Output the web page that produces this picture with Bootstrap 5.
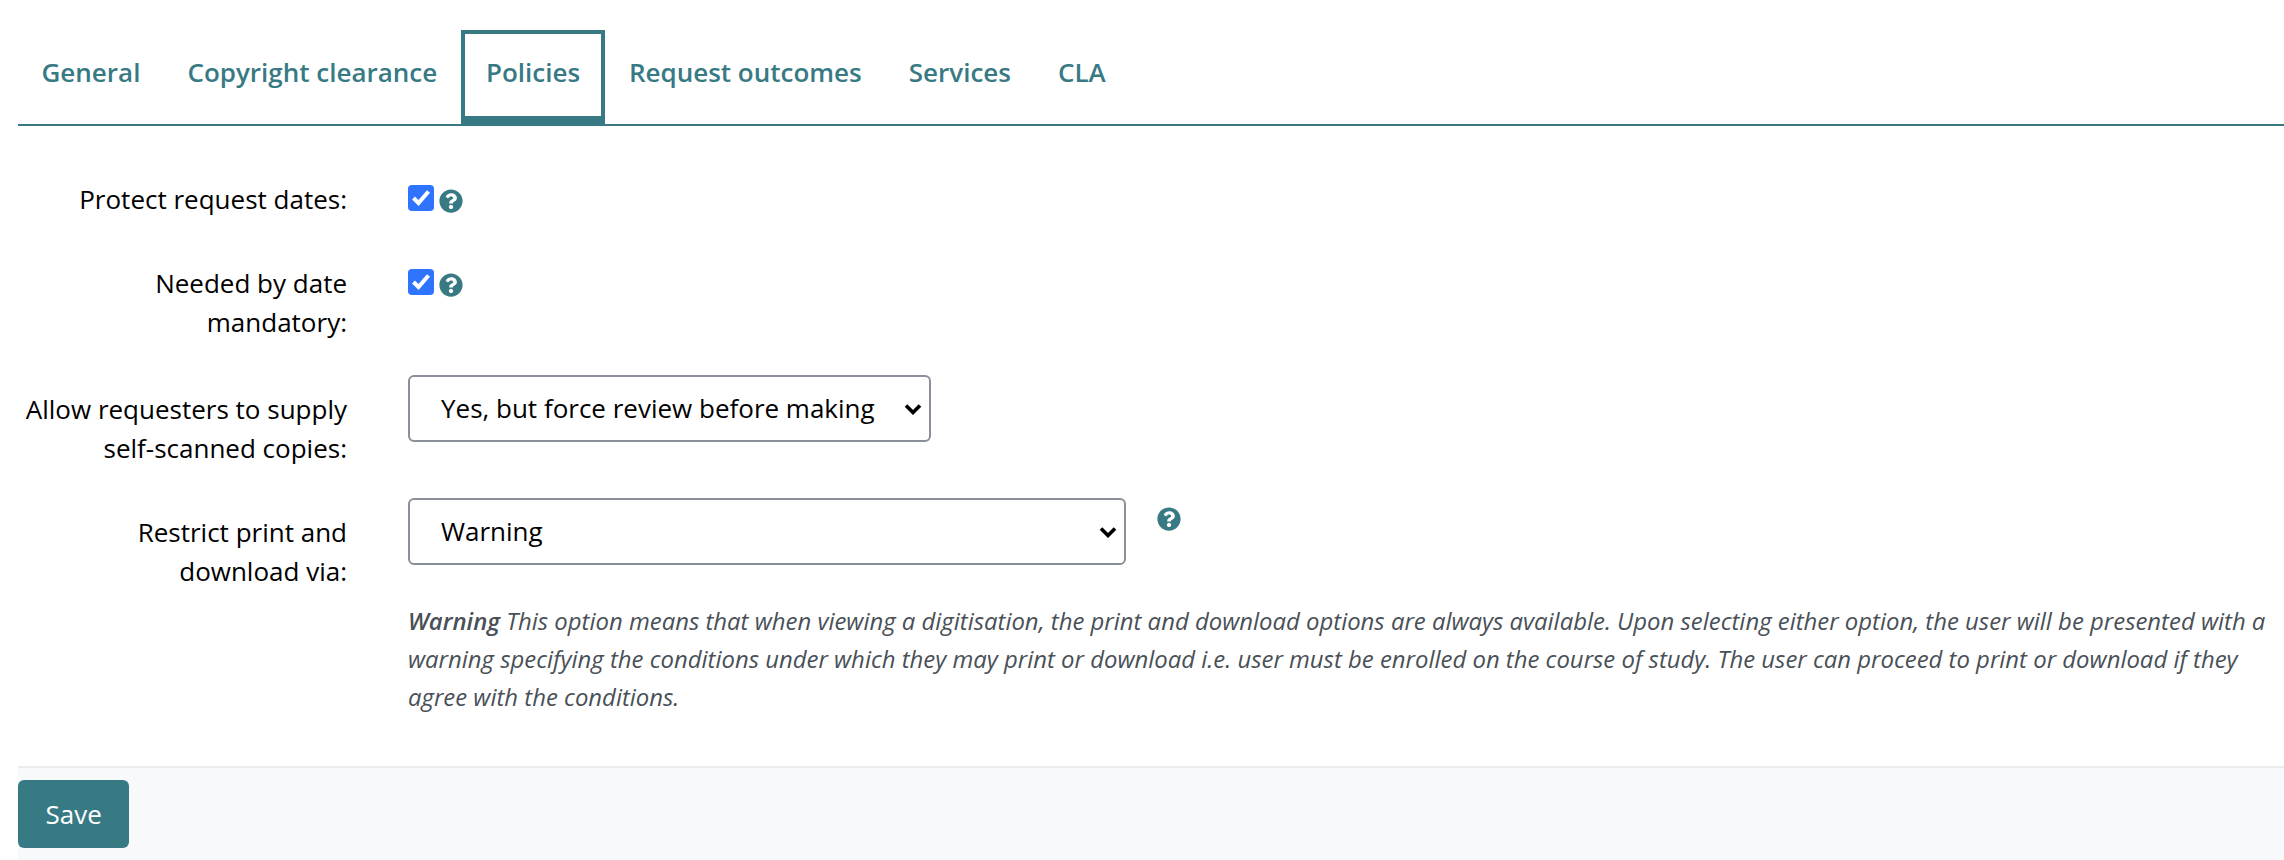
<!DOCTYPE html>
<html lang="en">
<head>
<meta charset="utf-8">
<title>Policies</title>
<link href="https://cdn.jsdelivr.net/npm/bootstrap@5.3.0/dist/css/bootstrap.min.css" rel="stylesheet">
<style>
body{font-family:"Open Sans",sans-serif;font-size:26px;line-height:39px;color:#000;background:#fff;}
.shell{padding:30px 0 0 18px;min-height:860px;display:flex;flex-direction:column;}
.tabbar{border-bottom:2px solid #377a84;height:96px;}
.tabbar .nav-link{color:#377a84;font-weight:600;font-size:26px;line-height:39px;padding:23px 23.5px 0;border:0;}
.tabbar .nav-link.active{color:#377a84;border:4px solid #377a84;border-bottom-width:10px;border-radius:0;padding:19px 21.25px 0;height:96px;background:#fff;}
.formarea{padding-top:54px;flex:1;}
.frow{display:flex;margin-bottom:30px;}
.frow.wide{margin-bottom:45px;}
.frow.tall{margin-bottom:33px;}
.lbl{width:329px;text-align:right;flex:none;margin:0;}
.lbl.pushed{padding-top:15px;}
.ctl{margin-left:61px;flex:1;min-width:0;padding-right:10px;}
.chk{appearance:none;-webkit-appearance:none;width:26px;height:26px;margin:5px 0 0;border-radius:4px;background:#2f74ff url("data:image/svg+xml,%3Csvg xmlns='http://www.w3.org/2000/svg' viewBox='0 0 26 26'%3E%3Cpath d='M5.5 13l5 5 10-11.5' fill='none' stroke='%23fff' stroke-width='4'/%3E%3C/svg%3E") center/100% no-repeat;flex:none;}
.hlp{width:24px;height:24px;fill:#377a84;flex:none;}
.hlp.mini{margin:9px 0 0 5px;}
.hlp.far{margin:9px 0 0 31px;}
.form-select.pick{font-size:26px;line-height:39px;height:67px;padding:12px 50px 12px 31px;border:2px solid #8a8f99;border-radius:6px;color:#000;font-family:inherit;background-image:url("data:image/svg+xml,%3Csvg xmlns='http://www.w3.org/2000/svg' viewBox='0 0 18 12'%3E%3Cpath d='M2 2.5l7 7 7-7' fill='none' stroke='%23000' stroke-width='3.6'/%3E%3C/svg%3E");background-size:18px 12px;background-position:right 7px center;}
.w1{width:523px;}.w2{width:718px;}
.note{font-style:italic;color:#495057;font-size:23.9px;line-height:38px;margin:37px 0 0;}
.note b{font-weight:600;}
.foot{background:#f8f9fa;border-top:2px solid #e9ecef;height:94px;padding-top:12px;}
.savebtn{background:#377a84;border:0;color:#fff;font-size:26px;line-height:39px;padding:14.5px 27.5px;border-radius:6px;}
</style>
</head>
<body>
<div class="shell">
  <ul class="nav tabbar">
    <li class="nav-item"><a class="nav-link" href="#">General</a></li>
    <li class="nav-item"><a class="nav-link" href="#">Copyright clearance</a></li>
    <li class="nav-item"><a class="nav-link active" href="#">Policies</a></li>
    <li class="nav-item"><a class="nav-link" href="#">Request outcomes</a></li>
    <li class="nav-item"><a class="nav-link" href="#">Services</a></li>
    <li class="nav-item"><a class="nav-link" href="#">CLA</a></li>
  </ul>
  <form class="formarea">
    <div class="frow wide">
      <label class="lbl">Protect request dates:</label>
      <div class="ctl d-flex align-items-start"><input class="chk" type="checkbox" checked>
        <svg class="hlp mini" viewBox="0 0 512 512"><path d="M504 256c0 137-111 248-248 248S8 393 8 256 119 8 256 8s248 111 248 248zM263 90c-54 0-89 23-116 64-4 5-3 12 3 16l35 26c5 4 13 3 17-2 18-23 30-36 57-36 20 0 45 13 45 32 0 15-12 22-32 33-23 13-54 30-54 71v4c0 7 5 12 12 12h56c7 0 12-5 12-12v-1c0-29 83-30 83-106 0-57-59-101-118-101zm-7 246c-25 0-46 21-46 46s21 46 46 46 46-21 46-46-21-46-46-46z"/></svg></div>
    </div>
    <div class="frow tall">
      <label class="lbl">Needed by date mandatory:</label>
      <div class="ctl d-flex align-items-start"><input class="chk" type="checkbox" checked>
        <svg class="hlp mini" viewBox="0 0 512 512"><path d="M504 256c0 137-111 248-248 248S8 393 8 256 119 8 256 8s248 111 248 248zM263 90c-54 0-89 23-116 64-4 5-3 12 3 16l35 26c5 4 13 3 17-2 18-23 30-36 57-36 20 0 45 13 45 32 0 15-12 22-32 33-23 13-54 30-54 71v4c0 7 5 12 12 12h56c7 0 12-5 12-12v-1c0-29 83-30 83-106 0-57-59-101-118-101zm-7 246c-25 0-46 21-46 46s21 46 46 46 46-21 46-46-21-46-46-46z"/></svg></div>
    </div>
    <div class="frow">
      <label class="lbl pushed">Allow requesters to supply self-scanned copies:</label>
      <div class="ctl"><select class="form-select pick w1"><option>Yes, but force review before making</option></select></div>
    </div>
    <div class="frow mb-0">
      <label class="lbl pushed">Restrict print and download via:</label>
      <div class="ctl">
        <div class="d-flex align-items-start">
          <select class="form-select pick w2"><option>Warning</option></select>
          <svg class="hlp far" viewBox="0 0 512 512"><path d="M504 256c0 137-111 248-248 248S8 393 8 256 119 8 256 8s248 111 248 248zM263 90c-54 0-89 23-116 64-4 5-3 12 3 16l35 26c5 4 13 3 17-2 18-23 30-36 57-36 20 0 45 13 45 32 0 15-12 22-32 33-23 13-54 30-54 71v4c0 7 5 12 12 12h56c7 0 12-5 12-12v-1c0-29 83-30 83-106 0-57-59-101-118-101zm-7 246c-25 0-46 21-46 46s21 46 46 46 46-21 46-46-21-46-46-46z"/></svg>
        </div>
        <p class="note"><b>Warning</b> This option means that when viewing a digitisation, the print and download options are always available. Upon selecting either option, the user will be presented with a warning specifying the conditions under which they may print or download i.e. user must be enrolled on the course of study. The user can proceed to print or download if they agree with the conditions.</p>
      </div>
    </div>
  </form>
  <div class="foot"><button type="button" class="btn savebtn">Save</button></div>
</div>
<script src="https://cdn.jsdelivr.net/npm/bootstrap@5.3.0/dist/js/bootstrap.bundle.min.js"></script>
</body>
</html>
